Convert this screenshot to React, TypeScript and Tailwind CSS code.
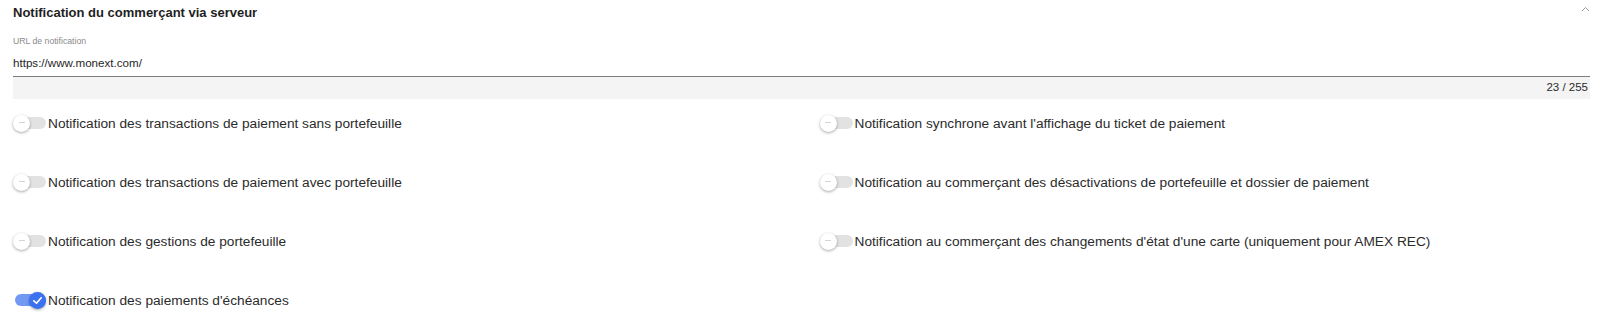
import React from "react";

function Toggle({ on }: { on: boolean }) {
  return (
    <div className="relative w-[33px] h-[17px] shrink-0">
      <div
        className={`absolute left-[2px] right-0 top-[2px] h-[12px] rounded-full ${
          on ? "bg-[#729af5]" : "bg-[#e2e2e2]"
        }`}
      />
      {on ? (
        <div className="absolute left-[16px] top-0 w-[17px] h-[17px] rounded-full bg-[#3b70ee] shadow-[0_1px_3px_rgba(0,0,0,0.35)] flex items-center justify-center">
          <svg width="11" height="11" viewBox="0 0 12 12" fill="none">
            <path d="M2 6.3 L4.9 9 L10 3" stroke="white" strokeWidth="1.8" strokeLinecap="round" strokeLinejoin="round" />
          </svg>
        </div>
      ) : (
        <div className="absolute left-0 top-0 w-[17px] h-[17px] rounded-full bg-white shadow-[0_1px_3px_rgba(0,0,0,0.35)] flex items-center justify-center">
          <div className="w-[6px] h-[1px] bg-[#d4d4d4] -mt-[3px]" />
        </div>
      )}
    </div>
  );
}

function Row({ label, on = false }: { label: string; on?: boolean }) {
  return (
    <div className="h-[59px] flex items-center gap-[2px]">
      <Toggle on={on} />
      <span className="text-[13.7px] text-[#2b2b2b] leading-none">{label}</span>
    </div>
  );
}

export default function App() {
  return (
    <div
      className="bg-white w-[1603px] h-[325px] overflow-hidden px-[13px]"
      style={{ fontFamily: '"Liberation Sans", Arial, sans-serif' }}
    >
      <div className="h-[25px] flex items-center justify-between">
        <h2 className="text-[13px] font-bold text-[#1f1f1f] leading-none">
          Notification du commerçant via serveur
        </h2>
        <svg width="9" height="6" viewBox="0 0 9 6" fill="none" className="-mt-[8px]">
          <path d="M1 5 L4.5 1.5 L8 5" stroke="#9a9a9a" strokeWidth="1" />
        </svg>
      </div>
      <div className="pt-[11px] text-[8.7px] leading-[10px] text-[#8a8a8a]">URL de notification</div>
      <div className="mt-[10px] pb-[6px] border-b border-[#7d7d7d] text-[11.6px] leading-[14px] text-[#1f1f1f]">
        https://www.monext.com/
      </div>
      <div className="h-[22px] bg-[#f3f4f3] flex items-center justify-end pr-[2px] text-[11.5px] text-[#2b2b2b]">
        23 / 255
      </div>
      <div className="grid grid-cols-2 gap-x-[36px] -mt-[5px]">
        <Row label="Notification des transactions de paiement sans portefeuille" />
        <Row label="Notification synchrone avant l'affichage du ticket de paiement" />
        <Row label="Notification des transactions de paiement avec portefeuille" />
        <Row label="Notification au commerçant des désactivations de portefeuille et dossier de paiement" />
        <Row label="Notification des gestions de portefeuille" />
        <Row label="Notification au commerçant des changements d'état d'une carte (uniquement pour AMEX REC)" />
        <Row label="Notification des paiements d'échéances" on />
      </div>
    </div>
  );
}
